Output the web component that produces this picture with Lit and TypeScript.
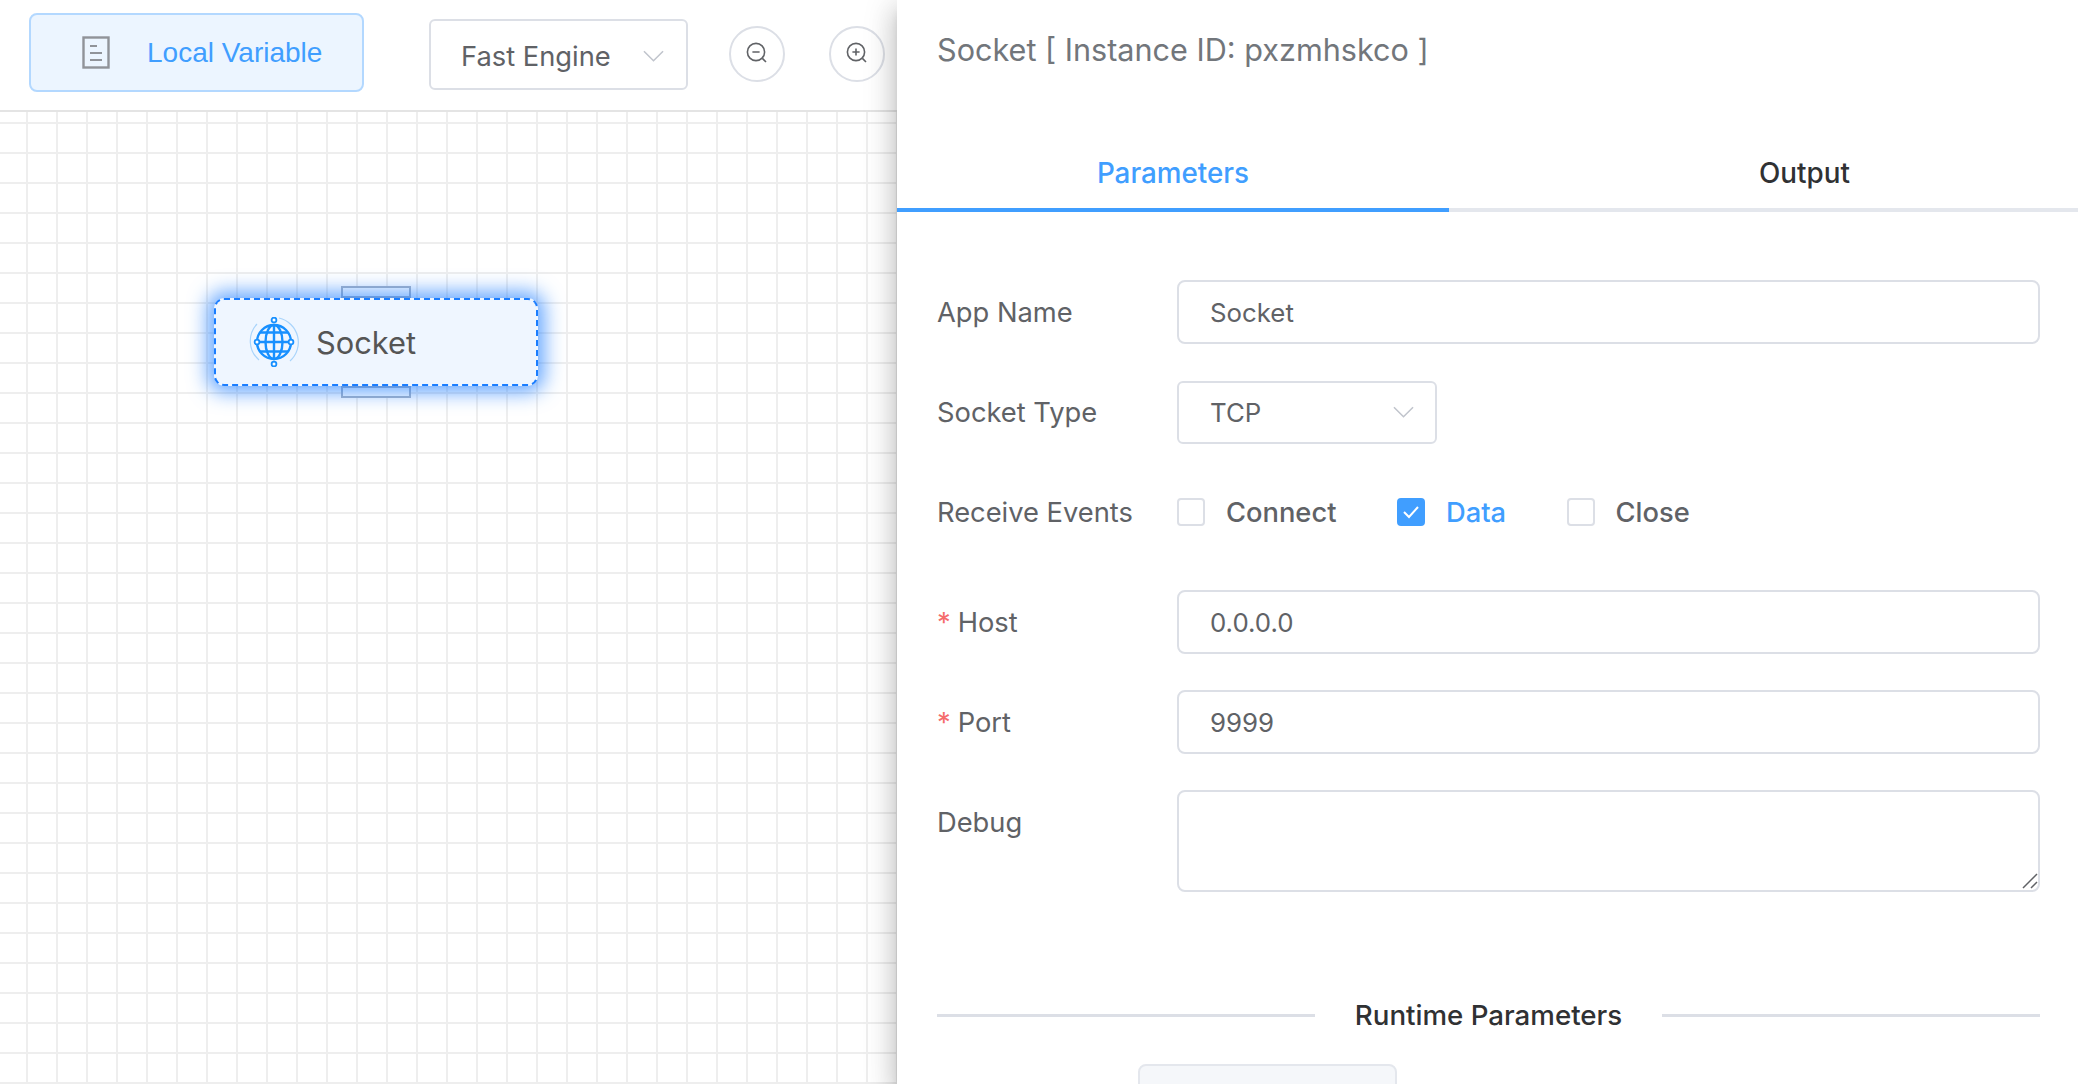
import { LitElement, css, html, svg } from 'lit';
import { customElement } from 'lit/decorators.js';
import { classMap } from 'lit/directives/class-map.js';

const chevron = html`<svg class="chevron" viewBox="0 0 22 12" fill="none" stroke="#c0c4cc" stroke-width="1.6"><path d="M1 1l10 10L21 1"/></svg>`;

const zoomIcon = (plus: boolean) => html`
    <svg class="zoom-icon" viewBox="0 0 24 24" fill="none" stroke="#606266" stroke-width="1.6">
        <circle cx="11" cy="11" r="8.6"/>
        <path d="M17.4 17.4l3.6 3.6M7.4 11h7.2"/>
        ${plus ? svg`<path d="M11 7.4v7.2"/>` : ''}
    </svg>`;

const globe = html`
    <svg class="globe" viewBox="0 0 50 50" fill="none" stroke="#1890ff">
        <path d="M8 7A25 25 0 0 0 10 43M30 1A25 25 0 0 1 41 44" stroke="#a9d4fb" stroke-width="1.2"/>
        <circle cx="25" cy="25" r="17" stroke-width="2.400"/>
        <ellipse cx="25" cy="25" rx="8.5" ry="17" stroke-width="2.400"/>
        <path d="M25 8v34M8 25h34M11 15.500h28M11 34.500h28" stroke-width="2.400"/>
        <circle cx="25" cy="3" r="2.400" fill="#fff" stroke-width="1.800"/>
        <circle cx="25" cy="47" r="2.400" fill="#fff" stroke-width="1.800"/>
        <circle cx="8" cy="25" r="2.400" fill="#fff" stroke-width="1.800"/>
        <circle cx="42" cy="25" r="2.400" fill="#fff" stroke-width="1.800"/>
    </svg>`;

@customElement('app-root')
export class AppRoot extends LitElement {
    static styles = css`
        :host {
            display: block;
            position: relative;
            width: 2078px;
            height: 1084px;
            overflow: hidden;
            background: #fff;
            font-family: Inter, "Liberation Sans", sans-serif;
            font-size: 27.300px;
            color: #606266;
        }
        * {
            box-sizing: border-box;
        }
        .toolbar {
            display: flex;
            align-items: center;
            height: 112px;
            padding: 0 0 0 29px;
            border-bottom: 2px solid #e4e4e4;
        }
        .local-variable {
            display: flex;
            align-items: center;
            width: 335px;
            height: 79px;
            padding-left: 51px;
            margin-bottom: 5px;
            border: 2px solid #b3d8ff;
            border-radius: 8px;
            background: #ecf5ff;
            color: #409eff;
            font-family: "Liberation Sans", sans-serif;
            font-size: 28px;
        }
        .doc-icon {
            width: 28px;
            height: 33px;
            margin-right: 37px;
        }
        .engine {
            width: 259px;
            height: 71px;
            margin-left: 65px;
            margin-right: 41px;
            margin-bottom: 2px;
            padding: 4px 22px 0 30px;
        }
        .select {
            display: flex;
            align-items: center;
            justify-content: space-between;
            border: 2px solid #dcdfe6;
            border-radius: 6px;
            background: #fff;
        }
        .chevron {
            width: 21px;
            height: 12px;
        }
        .round {
            display: flex;
            align-items: center;
            justify-content: center;
            width: 56px;
            height: 56px;
            margin-right: 44px;
            margin-bottom: 3px;
            border: 2px solid #dcdfe6;
            border-radius: 50%;
        }
        .zoom-icon {
            width: 24px;
            height: 24px;
            margin-top: -2px;
        }
        .canvas {
            position: relative;
            height: 972px;
            background-color: #fff;
            background-image:
                linear-gradient(#eeeeee 2px, transparent 2px),
                linear-gradient(90deg, #eeeeee 2px, transparent 2px);
            background-size: 30px 30px;
            background-position: 0 10px, 26px 0;
        }
        .node {
            position: absolute;
            left: 214px;
            top: 186px;
            display: flex;
            align-items: center;
            width: 324px;
            height: 88px;
            padding-left: 33px;
            border: 2px dashed #1a7dff;
            border-radius: 10px;
            background: #eff6ff;
            box-shadow: 0 0 20px 6px rgba(30, 125, 255, 0.7);
            font-size: 30.800px;
            color: #555;
        }
        .port {
            position: absolute;
            left: 341px;
            width: 70px;
            height: 12px;
            border: 2px solid #aab4c4;
            background: #fff;
        }
        .port.top {
            top: 174px;
        }
        .port.bottom {
            top: 274px;
        }
        .globe {
            width: 50px;
            height: 50px;
            margin-right: 17px;
        }
        .drawer {
            position: absolute;
            top: 0;
            bottom: 0;
            left: 897px;
            right: 0;
            background: #fff;
            box-shadow: 0 8px 10px -5px rgba(0, 0, 0, 0.2), 0 16px 24px 2px rgba(0, 0, 0, 0.14), 0 6px 30px 5px rgba(0, 0, 0, 0.12);
        }
        .title {
            padding: 30px 40px 0;
            height: 140px;
            font-size: 30.600px;
            line-height: 40px;
            color: #72767b;
        }
        .tabs {
            display: flex;
            height: 72px;
            border-bottom: 4px solid #e4e7ed;
            font-size: 27.800px;
            font-weight: 500;
            color: #303133;
        }
        .tab {
            display: flex;
            justify-content: center;
            padding-top: 16px;
        }
        .tab.first {
            width: 552px;
            height: 72px;
            border-bottom: 4px solid #409eff;
            color: #409eff;
        }
        .tab.second {
            flex: 1;
            padding-left: 82px;
        }
        form {
            display: flex;
            flex-direction: column;
            padding: 68px 38px 0 40px;
        }
        .row {
            display: grid;
            grid-template-columns: 240px 1fr;
            align-items: center;
            min-height: 64px;
            margin-bottom: 36px;
        }
        .row.events {
            margin-bottom: 46px;
        }
        .row.debug {
            position: relative;
            align-items: start;
            margin-bottom: 0;
        }
        .row.debug label {
            padding-top: 16px;
        }
        .required {
            color: #f56c6c;
            margin-right: 7px;
        }
        input, textarea {
            display: block;
            width: 100%;
            height: 64px;
            margin: 0;
            padding: 1px 31px 0;
            border: 2px solid #dcdfe6;
            border-radius: 8px;
            outline: none;
            background: #fff;
            font: inherit;
            font-size: 25.800px;
            color: inherit;
        }
        textarea {
            height: 102px;
            resize: none;
        }
        .resizer {
            position: absolute;
            right: 2px;
            bottom: 3px;
            width: 16px;
            height: 16px;
        }
        .select.type {
            width: 260px;
            height: 63px;
            padding: 0 21px 0 31px;
            font-size: 25.800px;
        }
        .checks {
            display: flex;
            align-items: center;
            font-weight: 500;
        }
        .check {
            display: flex;
            align-items: center;
            margin-right: 60.500px;
        }
        .check.on {
            color: #409eff;
        }
        .box {
            display: flex;
            align-items: center;
            justify-content: center;
            width: 28px;
            height: 28px;
            margin-right: 21px;
            border: 2px solid #dcdfe6;
            border-radius: 4px;
        }
        .check.on .box {
            border-color: #409eff;
            background: #409eff;
        }
        .divider {
            display: flex;
            align-items: center;
            gap: 40px;
            margin-top: 106px;
            font-size: 27.700px;
            font-weight: 500;
            color: #303133;
        }
        .divider::before, .divider::after {
            content: "";
            flex: 1;
            height: 3px;
            background: #dcdfe6;
        }
        .stub {
            width: 259px;
            height: 60px;
            margin: 32px 0 0 201px;
            border: 2px solid #e4e7ed;
            border-radius: 8px;
            background: #f5f7fa;
        }
    `;

    renderCheck(text: string, on = false) {
        return html`
            <div class="${classMap({ check: true, on })}">
                <span class="box">${on ? html`<svg width="18" height="14" viewBox="0 0 18 14" fill="none" stroke="#fff" stroke-width="2"><path d="M2 7l5 5L16 2"/></svg>` : ''}</span>
                ${text}
            </div>`;
    }

    render() {
        return html`
            <div class="toolbar">
                <div class="local-variable">
                    <svg class="doc-icon" viewBox="0 0 28 33" fill="none" stroke="#909399" stroke-width="2.400">
                        <rect x="1.500" y="1.500" width="25" height="30"/>
                        <path d="M8 10h7M8 17h12M8 24h12" stroke-width="2"/>
                    </svg>
                    Local Variable
                </div>
                <div class="select engine">Fast Engine ${chevron}</div>
                <div class="round">${zoomIcon(false)}</div>
                <div class="round">${zoomIcon(true)}</div>
            </div>
            <div class="canvas">
                <div class="port top"></div>
                <div class="port bottom"></div>
                <div class="node">${globe}<span>Socket</span></div>
            </div>
            <div class="drawer">
                <div class="title">Socket [ Instance ID: pxzmhskco ]</div>
                <div class="tabs">
                    <div class="tab first">Parameters</div>
                    <div class="tab second">Output</div>
                </div>
                <form>
                    <div class="row">
                        <label>App Name</label>
                        <input .value="${'Socket'}" />
                    </div>
                    <div class="row">
                        <label>Socket Type</label>
                        <div class="select type">TCP ${chevron}</div>
                    </div>
                    <div class="row events">
                        <label>Receive Events</label>
                        <div class="checks">
                            ${this.renderCheck('Connect')}
                            ${this.renderCheck('Data', true)}
                            ${this.renderCheck('Close')}
                        </div>
                    </div>
                    <div class="row">
                        <label><span class="required">*</span>Host</label>
                        <input .value="${'0.0.0.0'}" />
                    </div>
                    <div class="row">
                        <label><span class="required">*</span>Port</label>
                        <input .value="${'9999'}" />
                    </div>
                    <div class="row debug">
                        <label>Debug</label>
                        <textarea></textarea>
                        <svg class="resizer" viewBox="0 0 16 16" fill="none" stroke="#606266" stroke-width="1.5"><path d="M1 15L15 1M9 15l6-6"/></svg>
                    </div>
                    <div class="divider">Runtime Parameters</div>
                    <div class="stub"></div>
                </form>
            </div>
        `;
    }
}
